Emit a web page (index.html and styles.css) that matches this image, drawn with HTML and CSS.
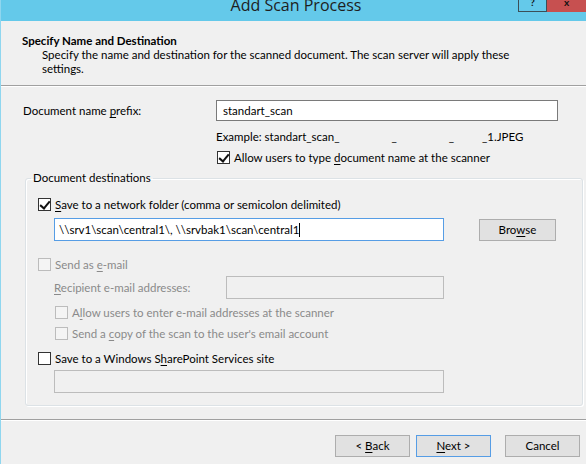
FILE: index.html
```html
<!DOCTYPE html>
<html lang="en">
<head>
    <meta charset="UTF-8">
    <title>Add Scan Process</title>
    <link rel="stylesheet" href="styles.css">
</head>
<body>
    <div class="window">
        <div class="titlebar">
            <span class="title">Add Scan Process</span>
            <div class="caption-buttons">
                <div class="cap-btn help">?</div>
                <div class="cap-btn close">x</div>
            </div>
        </div>

        <div class="header">
            <div class="header-title">Specify Name and Destination</div>
            <div class="header-desc">Specify the name and destination for the scanned document. The scan server will apply these settings.</div>
        </div>

        <div class="content">
            <div class="prefix-row">
                <label class="prefix-label">Document name <u>p</u>refix:</label>
                <div class="textbox prefix-input">standart_scan</div>
            </div>
            <div class="example">Example: standart_scan_<span class="gap1">_</span><span class="gap2">_</span><span class="gap3">_1.JPEG</span></div>
            <div class="check-row allow-type">
                <span class="checkbox checked"></span>
                <span>Allow users to type <u>d</u>ocument name at the scanner</span>
            </div>

            <fieldset class="group">
                <legend>Document destinations</legend>

                <div class="check-row">
                    <span class="checkbox checked"></span>
                    <span><u>S</u>ave to a network folder (comma or semicolon delimited)</span>
                </div>
                <div class="path-row">
                    <div class="textbox focused path-input">\\srv1\scan\central1\, \\srvbak1\scan\central1<span class="caret"></span></div>
                    <div class="button browse">Bro<u>w</u>se</div>
                </div>

                <div class="check-row disabled email-row">
                    <span class="checkbox"></span>
                    <span>Send as <u>e</u>-mail</span>
                </div>
                <div class="recipient-row disabled">
                    <label><u>R</u>ecipient e-mail addresses:</label>
                    <div class="textbox off recipient-input"></div>
                </div>
                <div class="check-row disabled sub">
                    <span class="checkbox"></span>
                    <span>A<u>l</u>low users to enter e-mail addresses at the scanner</span>
                </div>
                <div class="check-row disabled sub copy-row">
                    <span class="checkbox"></span>
                    <span>Send a <u>c</u>opy of the scan to the user's email account</span>
                </div>

                <div class="check-row sharepoint-row">
                    <span class="checkbox"></span>
                    <span>Save to a Windows S<u>h</u>arePoint Services site</span>
                </div>
                <div class="textbox off sharepoint-input"></div>
            </fieldset>
        </div>

        <div class="footer">
            <div class="button">&lt; <u>B</u>ack</div>
            <div class="button default"><u>N</u>ext &gt;</div>
            <div class="button cancel">Cancel</div>
        </div>
    </div>
</body>
</html>
```

FILE: styles.css
```css
body {
    margin: 0;
    font-family: Lato, "Noto Sans", sans-serif;
    font-size: 11.5px;
    color: #000;
    background: #f0f0f0;
}
u {
    text-decoration-thickness: 1px;
    text-underline-offset: 2px;
}
.window {
    width: 586px;
    height: 464px;
    border-left: 1px solid #8fd6ef;
    box-sizing: border-box;
    background: #f0f0f0;
    overflow: hidden;
}
.titlebar {
    height: 21px;
    margin-left: -1px;
    background: #64c9ea;
    position: relative;
    text-align: center;
}
.title {
    display: inline-block;
    font-family: "Open Sans", sans-serif;
    font-size: 16px;
    line-height: 16px;
    margin-top: -5px;
    margin-left: 6px;
    color: #1e1e1e;
}
.caption-buttons {
    position: absolute;
    top: 0;
    right: 0;
    display: flex;
}
.cap-btn {
    height: 11px;
    font-size: 10px;
    line-height: 4px;
    font-weight: bold;
    overflow: hidden;
}
.help {
    width: 29px;
    border: 1px solid #3b4f57;
    border-top: none;
    box-sizing: border-box;
    height: 12px;
    color: #111;
}
.close {
    width: 39px;
    height: 12px;
    background: #c75050;
    color: #111;
}

.header {
    height: 65px;
    padding: 12px 0 0 21px;
    box-sizing: border-box;
    border-bottom: 1px solid #a0a0a0;
    box-shadow: 0 1px 0 #fff;
}
.header-title {
    font-weight: bold;
    line-height: 15px;
}
.header-desc {
    margin-left: 20px;
    line-height: 14px;
    width: 490px;
}

.content {
    padding: 14px 0 0 22px;
}
.prefix-row {
    display: flex;
    align-items: center;
    height: 21px;
}
.prefix-label {
    width: 193px;
}
.textbox {
    height: 21px;
    box-sizing: border-box;
    border: 1px solid #7a7a7a;
    background: #fff;
    padding: 0 6px;
    line-height: 19px;
    white-space: nowrap;
}
.prefix-input {
    width: 342px;
}
.example {
    margin: 9px 0 0 193px;
    line-height: 14px;
}
.gap1 { margin-left: 52px; }
.gap2 { margin-left: 52px; }
.gap3 { margin-left: 28px; }

.check-row {
    display: flex;
    align-items: center;
    gap: 4px;
    height: 16px;
}
.allow-type {
    margin: 5px 0 0 194px;
}
.checkbox {
    width: 13px;
    height: 13px;
    box-sizing: border-box;
    border: 1px solid #333;
    background: #fff;
    position: relative;
    flex: none;
}
.checkbox.checked::after {
    content: "";
    position: absolute;
    left: 3px;
    top: 0px;
    width: 4px;
    height: 8px;
    border: solid #111;
    border-width: 0 2px 2px 0;
    transform: rotate(40deg);
}
.disabled {
    color: #8a8a8a;
}
.disabled .checkbox {
    border-color: #bcbcbc;
    background: #f4f4f4;
}

.group {
    margin: 6px 3px 0 2px;
    padding: 11px 0 12px 12px;
    border: 1px solid #dce2e6;
    border-radius: 3px;
    box-shadow: inset 1px 1px 0 #fff, 1px 1px 0 #fff;
}
.group legend {
    padding: 0 2px;
    margin-left: -7px;
    line-height: 14px;
}
.path-row {
    display: flex;
    align-items: center;
    margin: 6px 0 0 16px;
}
.path-input {
    width: 390px;
    height: 23px;
    line-height: 21px;
    padding-left: 4px;
}
.focused {
    border-color: #569de5;
}
.caret {
    display: inline-block;
    width: 1px;
    height: 14px;
    background: #000;
    vertical-align: -3px;
}
.button {
    width: 75px;
    height: 22px;
    box-sizing: border-box;
    border: 1px solid #adadad;
    background: #e1e1e1;
    text-align: center;
    line-height: 20px;
}
.browse {
    width: 77px;
    margin-left: 35px;
}
.email-row {
    margin-top: 15px;
}
.recipient-row {
    display: flex;
    align-items: center;
    margin: 4px 0 0 16px;
}
.recipient-row label {
    width: 172px;
}
.off {
    background: #f0f0f0;
    border-color: #bcbcbc;
    height: 23px;
}
.recipient-input {
    width: 218px;
}
.sub {
    margin: 5px 0 0 17px;
}
.copy-row {
    margin-top: 5px;
}
.sharepoint-row {
    margin-top: 9px;
}
.sharepoint-input {
    width: 390px;
    margin: 4px 0 0 16px;
}

.footer {
    margin-top: 13px;
    border-top: 1px solid #a0a0a0;
    box-shadow: inset 0 1px 0 #fff;
    display: flex;
    justify-content: flex-end;
    padding: 15px 6px 0 0;
    gap: 6px;
}
.default {
    border-color: #569de5;
}
.cancel {
    margin-left: 8px;
}
```
